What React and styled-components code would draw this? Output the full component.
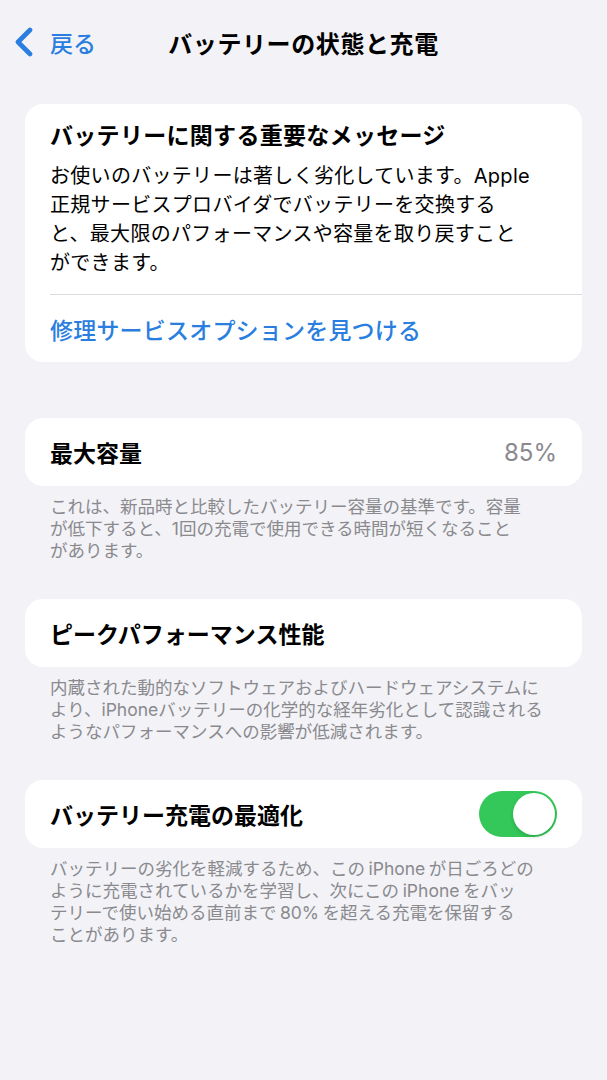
import React from "react";
import styled, { createGlobalStyle } from "styled-components";

const Global = createGlobalStyle`
  html, body { margin: 0; padding: 0; background: #f2f2f7; }
  body {
    font-family: "Inter", "Noto Sans CJK JP", "Noto Sans", sans-serif;
    color: #000;
    -webkit-font-smoothing: antialiased;
  }
`;

const Page = styled.div`
  width: 607px;
  min-height: 1080px;
  background: #f2f2f7;
`;

const NavBar = styled.header`
  height: 84px;
  display: grid;
  grid-template-columns: 1fr auto 1fr;
  align-items: center;
  padding: 0 14px;
  box-sizing: border-box;
`;

const Back = styled.button`
  justify-self: start;
  display: flex;
  align-items: center;
  gap: 16px;
  background: none;
  border: 0;
  padding: 0;
  color: #2a7ee0;
  font-family: inherit;
  font-size: 23px;
  font-weight: 500;
  cursor: pointer;
`;

const Title = styled.h1`
  margin: 0;
  font-size: 24px;
  font-weight: 700;
  letter-spacing: 0.6px;
`;

const Content = styled.main`
  padding: 20px 25px 0;
  display: flex;
  flex-direction: column;
`;

const Group = styled.section`
  margin-bottom: ${(p) => p.$gap}px;
`;

const Card = styled.div`
  background: #fff;
  border-radius: 18px;
  overflow: hidden;
`;

const MessageBlock = styled.div`
  padding: 17px 25px 16px;
  display: flex;
  flex-direction: column;
  gap: 11px;
`;

const CardHeading = styled.div`
  font-size: 23px;
  line-height: 30px;
  font-weight: 700;
  letter-spacing: 0.3px;
`;

const Body = styled.p`
  margin: 0;
  font-size: 20px;
  line-height: 29px;
  letter-spacing: 0.3px;
  white-space: nowrap;
`;

const Divider = styled.div`
  height: 1px;
  background: #dcdce0;
  margin-left: 25px;
`;

const LinkRow = styled.a`
  display: block;
  padding: 21px 25px 16px;
  font-size: 23px;
  line-height: 30px;
  font-weight: 500;
  letter-spacing: 0.2px;
  color: #2a7ee0;
  text-decoration: none;
`;

const Row = styled.div`
  height: 68px;
  padding: 0 25px;
  display: flex;
  align-items: center;
  justify-content: space-between;
`;

const RowLabel = styled.span`
  font-size: 23px;
  font-weight: 700;
`;

const RowValue = styled.span`
  font-size: 24px;
  color: #8a8a8e;
  font-family: "Inter", "Noto Sans", sans-serif;
`;

const Footer = styled.p`
  margin: 0;
  padding: 10px 25px 0;
  font-size: 17.5px;
  line-height: 22px;
  color: #8a8a8e;
  white-space: nowrap;
`;

const Latin = styled.span`
  margin: 0 0.2em;
`;

const Toggle = styled.div`
  width: 78px;
  height: 46px;
  border-radius: 23px;
  background: ${(p) => (p.$on ? "#34c759" : "#e9e9eb")};
  position: relative;
  flex-shrink: 0;
`;

const Knob = styled.div`
  position: absolute;
  top: 2px;
  left: ${(p) => (p.$on ? "34px" : "2px")};
  width: 42px;
  height: 42px;
  border-radius: 50%;
  background: #fff;
  box-shadow: 0 2px 4px rgba(0, 0, 0, 0.15);
`;

const Chevron = () => (
  <svg width="20" height="30" viewBox="0 0 20 30" fill="none">
    <path
      d="M16 3 L4 15 L16 27"
      stroke="#2a7ee0"
      strokeWidth="4.6"
      strokeLinecap="round"
      strokeLinejoin="round"
    />
  </svg>
);

export default function App() {
  return (
    <Page>
      <Global />
      <NavBar>
        <Back>
          <Chevron />
          戻る
        </Back>
        <Title>バッテリーの状態と充電</Title>
        <span />
      </NavBar>
      <Content>
        <Group $gap={56}>
          <Card>
            <MessageBlock>
              <CardHeading>バッテリーに関する重要なメッセージ</CardHeading>
              <Body>
                お使いのバッテリーは著しく劣化しています。Apple
                <br />
                正規サービスプロバイダでバッテリーを交換する
                <br />
                と、最大限のパフォーマンスや容量を取り戻すこと
                <br />
                ができます。
              </Body>
            </MessageBlock>
            <Divider />
            <LinkRow href="#">修理サービスオプションを見つける</LinkRow>
          </Card>
        </Group>

        <Group $gap={37}>
          <Card>
            <Row>
              <RowLabel>最大容量</RowLabel>
              <RowValue>85%</RowValue>
            </Row>
          </Card>
          <Footer>
            これは、新品時と比較したバッテリー容量の基準です。容量
            <br />
            が低下すると、1回の充電で使用できる時間が短くなること
            <br />
            があります。
          </Footer>
        </Group>

        <Group $gap={37}>
          <Card>
            <Row>
              <RowLabel>ピークパフォーマンス性能</RowLabel>
            </Row>
          </Card>
          <Footer>
            内蔵された動的なソフトウェアおよびハードウェアシステムに
            <br />
            より、iPhoneバッテリーの化学的な経年劣化として認識される
            <br />
            ようなパフォーマンスへの影響が低減されます。
          </Footer>
        </Group>

        <Group $gap={0}>
          <Card>
            <Row>
              <RowLabel>バッテリー充電の最適化</RowLabel>
              <Toggle $on>
                <Knob $on />
              </Toggle>
            </Row>
          </Card>
          <Footer>
            バッテリーの劣化を軽減するため、この<Latin>iPhone</Latin>が日ごろどの
            <br />
            ように充電されているかを学習し、次にこの<Latin>iPhone</Latin>をバッ
            <br />
            テリーで使い始める直前まで<Latin>80%</Latin>を超える充電を保留する
            <br />
            ことがあります。
          </Footer>
        </Group>
      </Content>
    </Page>
  );
}
